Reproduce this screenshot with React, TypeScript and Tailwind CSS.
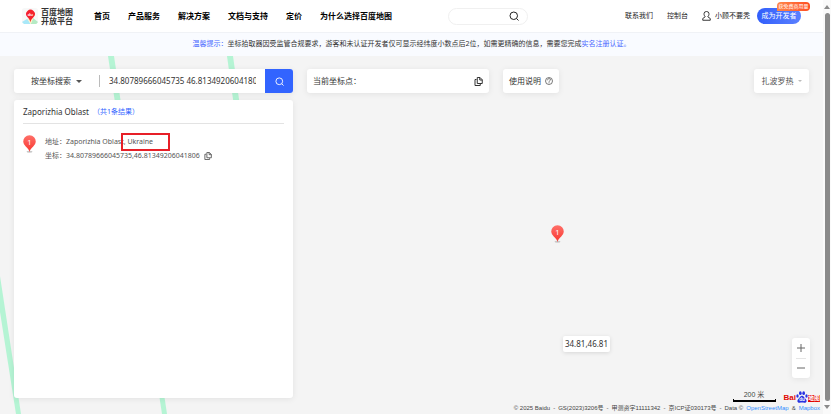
import { useState } from 'react'

const navItems = ['首页', '产品服务', '解决方案', '文档与支持', '定价', '为什么选择百度地图']

function SearchIcon({ className }: { className: string }) {
  return (
    <svg viewBox="0 0 20 20" fill="none" stroke="currentColor" strokeWidth="2" className={className} aria-hidden="true">
      <circle cx="9.5" cy="9.5" r="7.5" />
      <path d="M15 15l4 4" />
    </svg>
  )
}

function CopyIcon({ className }: { className: string }) {
  return (
    <svg viewBox="0 0 18 18" fill="none" stroke="currentColor" strokeWidth="2" strokeLinejoin="round" className={className} aria-hidden="true">
      <path d="M6.500 1h5.500l4.500 4.500V13h-10z" />
      <path d="M11.500 1v5h5" />
      <path d="M5 5H2v12h10.500v-3" />
    </svg>
  )
}

function Marker({ className }: { className: string }) {
  return (
    <svg viewBox="0 0 26 38" className={className} role="img" aria-label="1">
      <defs>
        <linearGradient id="marker" x1="0" y1="0" x2="0" y2="1">
          <stop offset="0" stopColor="#ff7069" />
          <stop offset="1" stopColor="#f8362f" />
        </linearGradient>
      </defs>
      <ellipse cx="13" cy="33.500" rx="6" ry="2" fill="#c8c8c8" />
      <path d="M13 34c-1-5-4-7-7.500-11A12.500 12.500 0 1 1 20.500 23C17 27 14 29 13 34z" fill="url(#marker)" />
      <text x="13" y="19" fontSize="15" fontFamily="Noto Sans" textAnchor="middle" fill="#fff">1</text>
    </svg>
  )
}

function Logo() {
  return (
    <a href="#" className="flex items-center gap-[3px]">
      <svg viewBox="0 0 48 48" className="size-4" aria-hidden="true">
        <rect width="48" height="48" rx="8" fill="#f7f8f8" />
        <path d="M0 42l16-10 10 16H6z" fill="#a9e8f8" />
        <path d="M48 42L33 30 26 48h17z" fill="#b5eac4" />
        <path d="M16 32l10 16 8-18z" fill="#fff3c4" />
        <path d="M25 43c-1-8-5-12-9-16A13 13 0 1 1 35 27c-5 5-8 8-10 16z" fill="#f5222d" />
        <text x="25" y="23" fontSize="13" fontWeight="700" fontFamily="Liberation Sans" textAnchor="middle" fill="#fff">du</text>
      </svg>
      <span className="text-[8px] leading-[9px] font-bold text-[#333]">百度地图<br />开放平台</span>
    </a>
  )
}

function Header() {
  return (
    <header className="flex h-8 items-center bg-white pr-[22px] pl-[22px] text-[#222]">
      <Logo />
      <nav className="ml-[21px] flex gap-[18px] text-[8px] font-bold whitespace-nowrap text-black">
        {navItems.map((item) => (
          <a key={item} href="#">{item}</a>
        ))}
      </nav>
      <label className="ml-14 flex h-[17px] w-20 items-center rounded-full border border-[#f0f0f0] px-2">
        <input type="search" aria-label="搜索" className="w-full min-w-0 flex-1 text-[8px] outline-none" />
        <SearchIcon className="size-[10px] shrink-0" />
      </label>
      <div className="ml-auto flex items-center text-[7px] whitespace-nowrap">
        <a href="#">联系我们</a>
        <a href="#" className="ml-[14px]">控制台</a>
        <a href="#" className="ml-[14px] flex items-center gap-1">
          <svg viewBox="0 0 18 20" fill="none" stroke="currentColor" strokeWidth="1.800" className="h-[10px] w-[9px]" aria-hidden="true">
            <path d="M6.500 11.500C4.500 9.500 4 7.500 4 5.500a5 4.500 0 0 1 10 0c0 2-.5 4-2.500 6l5 3.500v3.500h-15V15z" />
          </svg>
          小顾不要秃
        </a>
        <div className="relative ml-[7px]">
          <button type="button" className="block h-4 w-11 rounded-full bg-linear-to-r from-[#315efb] to-[#5b80ff] text-[7px] text-white">成为开发者</button>
          <span className="absolute -top-[6px] left-[20px] h-[9px] w-[33px] rounded-t-[4px] rounded-br-[4px] bg-linear-to-r from-[#ff8548] to-[#ff4c22] text-center text-[5px] leading-[9px] text-white">获免费商用量</span>
        </div>
      </div>
    </header>
  )
}

function ResultPanel() {
  return (
    <section className="mt-[7px] mb-4 w-[279px] flex-1 rounded-[3px] bg-white px-[9px] shadow-[0_1px_6px_rgba(0,0,0,0.08)]">
      <div className="flex h-6 items-center gap-1 border-b border-[#e3e3e3] text-[8px] leading-3 text-[#333]">
        <h1>Zaporizhia Oblast</h1>
        <span className="text-[7px] text-[#3264ff]">（共1条结果）</span>
      </div>
      <div className="flex pt-[11px] text-[7px] leading-[14px] whitespace-nowrap text-[#555]">
        <Marker className="h-[19px] w-[13px]" />
        <div className="ml-[9px]">
          <p>
            地址：Zaporizhia Oblast
            <span className="relative">
              , Ukraine
              <span className="absolute -top-[4px] -left-[3px] h-[18px] w-[49px] border-2 border-[#e71f28]" />
            </span>
          </p>
          <p className="flex items-center">
            坐标：34.80789666045735,46.81349206041806
            <button type="button" aria-label="复制坐标" className="ml-1">
              <CopyIcon className="size-2" />
            </button>
          </p>
        </div>
      </div>
    </section>
  )
}

function MapFooter() {
  return (
    <footer className="absolute right-[3px] bottom-[1px] font-['Liberation_Sans','Noto_Sans_CJK_SC',sans-serif] whitespace-nowrap text-[#444]">
      <div className="flex items-end justify-end">
        <div className="mr-2 mb-px w-[43px] text-center text-[7px] leading-[8px]">
          200 米
          <div className="h-[3px] border-x border-b-2 border-black" />
        </div>
        <div className="flex items-end text-[8px] leading-[10px] font-bold text-[#e10601]">
          Bai
          <svg viewBox="0 0 36 36" className="size-3" aria-hidden="true">
            <g fill="#2932e1">
              <ellipse cx="4.500" cy="15" rx="3.500" ry="5" />
              <ellipse cx="13" cy="6.500" rx="4" ry="5.500" />
              <ellipse cx="23" cy="6.500" rx="4" ry="5.500" />
              <ellipse cx="31.500" cy="15" rx="3.500" ry="5" />
              <path d="M18 14c5 0 7 6 11 10 6 7 1 12-4 11-5-1-9-1-14 0-5 1-10-4-4-11 4-4 6-10 11-10z" />
            </g>
            <text x="18" y="31" fontSize="14" fontFamily="Liberation Sans" textAnchor="middle" fill="#fff">du</text>
          </svg>
          <span className="mb-px bg-[#e10601] text-[6px] leading-[7px] text-white">地图</span>
        </div>
      </div>
      <p className="flex gap-[3px] text-[6px] leading-[10px]">
        <span>© 2025 Baidu</span>
        <span>-</span>
        <span>GS(2023)3206号</span>
        <span>-</span>
        <span>甲测资字11111342</span>
        <span>-</span>
        <span>京ICP证030173号</span>
        <span>-</span>
        <span>Data ©</span>
        <a href="#" className="text-[#2f8cff]">OpenStreetMap</a>
        <span>&amp;</span>
        <a href="#" className="text-[#2f8cff]">Mapbox</a>
      </p>
    </footer>
  )
}

export default function App() {
  const [query, setQuery] = useState('34.80789666045735 46.81349206041806')

  return (
    <div className="flex h-screen bg-white font-['Noto_Sans','Noto_Sans_CJK_SC',sans-serif]">
      <div className="flex min-w-0 flex-1 flex-col">
        <Header />
        <p className="flex h-6 shrink-0 items-center justify-center bg-[#f9fbff] text-[7px] whitespace-nowrap text-[#333] shadow-[inset_0_1px_0_#f0f2f6]">
          <span className="text-[#4767ff]">温馨提示：</span>
          坐标拾取器因受监管合规要求，游客和未认证开发者仅可显示经纬度小数点后2位，如需更精确的信息，需要您完成
          <a href="#" className="text-[#4767ff]">实名注册认证。</a>
        </p>
        <main className="relative isolate flex min-h-0 flex-1 flex-col overflow-hidden bg-[#f4f4f4] px-[14px] pt-[13px]">
          <svg className="absolute top-0 left-0 -z-10 h-[358px] w-[300px]" viewBox="0 0 300 358" fill="#b5f4d4" aria-hidden="true">
            <path d="M108 0h6l53 358h-5z" />
            <path d="M227 0h6l20 144h-6z" />
            <path d="M0 220l21 138h-5L0 256z" />
          </svg>
          <div className="flex h-6 shrink-0 text-[8px] whitespace-nowrap text-[#333]">
            <form className="flex w-[279px] overflow-hidden rounded-[3px] bg-white shadow-[0_1px_6px_rgba(0,0,0,0.08)]" onSubmit={(e) => e.preventDefault()}>
              <button type="button" className="ml-[17px] flex w-[68px] items-center gap-[5px]">
                按坐标搜索
                <span className="border-x-[3px] border-t-[3px] border-x-transparent border-t-[#555]" />
              </button>
              <span className="my-[6px] w-px bg-[#bbb]" />
              <input aria-label="坐标" value={query} onChange={(e) => setQuery(e.target.value)} className="ml-[9px] w-[147px] min-w-0 text-[8px] outline-none" />
              <button type="submit" aria-label="搜索" className="ml-auto flex w-7 items-center justify-center bg-[#3264ff] text-white">
                <SearchIcon className="size-[9px]" />
              </button>
            </form>
            <div className="ml-[14px] flex w-[182px] items-center justify-between rounded-[3px] bg-white px-[6px] shadow-[0_1px_6px_rgba(0,0,0,0.08)]">
              当前坐标点：
              <button type="button" aria-label="复制">
                <CopyIcon className="size-[9px]" />
              </button>
            </div>
            <button type="button" className="ml-[14px] flex w-14 items-center justify-center gap-1 rounded-[3px] bg-white shadow-[0_1px_6px_rgba(0,0,0,0.08)]">
              使用说明
              <svg viewBox="0 0 16 16" fill="none" stroke="currentColor" strokeWidth="1.300" className="size-2" aria-hidden="true">
                <circle cx="8" cy="8" r="7" />
                <path d="M5 6.500c0-4 6-4 6-1 0 2-3 2-3 4M8 10.500v2" />
              </svg>
            </button>
            <button type="button" className="ml-auto flex w-[55px] items-center justify-center gap-1 rounded-[3px] bg-white text-[#555] shadow-[0_1px_6px_rgba(0,0,0,0.08)]">
              扎波罗热
              <span className="border-x-2 border-t-2 border-x-transparent border-t-[#bbb]" />
            </button>
          </div>
          <ResultPanel />
          <Marker className="absolute top-[169px] left-[551px] h-[19px] w-[13px]" />
          <div className="absolute top-[280px] left-[563px] flex h-4 w-[47px] items-center justify-center rounded-[2px] bg-white text-[8px] text-[#333] shadow-[0_1px_4px_rgba(0,0,0,0.12)]">34.81,46.81</div>
          <div className="absolute right-[13px] bottom-9 flex h-10 w-[18px] flex-col rounded-[3px] bg-white px-1 text-[#666] shadow-[0_1px_6px_rgba(0,0,0,0.08)]">
            <button type="button" aria-label="放大" className="flex flex-1 items-center justify-center border-b border-[#e5e5e5]">
              <svg viewBox="0 0 8 8" stroke="currentColor" className="size-2" aria-hidden="true"><path d="M0 4h8M4 0v8" /></svg>
            </button>
            <button type="button" aria-label="缩小" className="flex flex-1 items-center justify-center">
              <svg viewBox="0 0 8 8" stroke="currentColor" className="size-2" aria-hidden="true"><path d="M0 4h8" /></svg>
            </button>
          </div>
          <MapFooter />
        </main>
      </div>
      <div className="flex w-2 flex-col items-center justify-between bg-[#fafafa] py-[5px]" aria-hidden="true">
        <span className="border-x-[3px] border-b-4 border-x-transparent border-b-[#8a8a8a]" />
        <span className="my-1 w-[5px] flex-1 rounded-full bg-[#8a8a8a]" />
        <span className="border-x-[3px] border-t-4 border-x-transparent border-t-[#8a8a8a]" />
      </div>
    </div>
  )
}
